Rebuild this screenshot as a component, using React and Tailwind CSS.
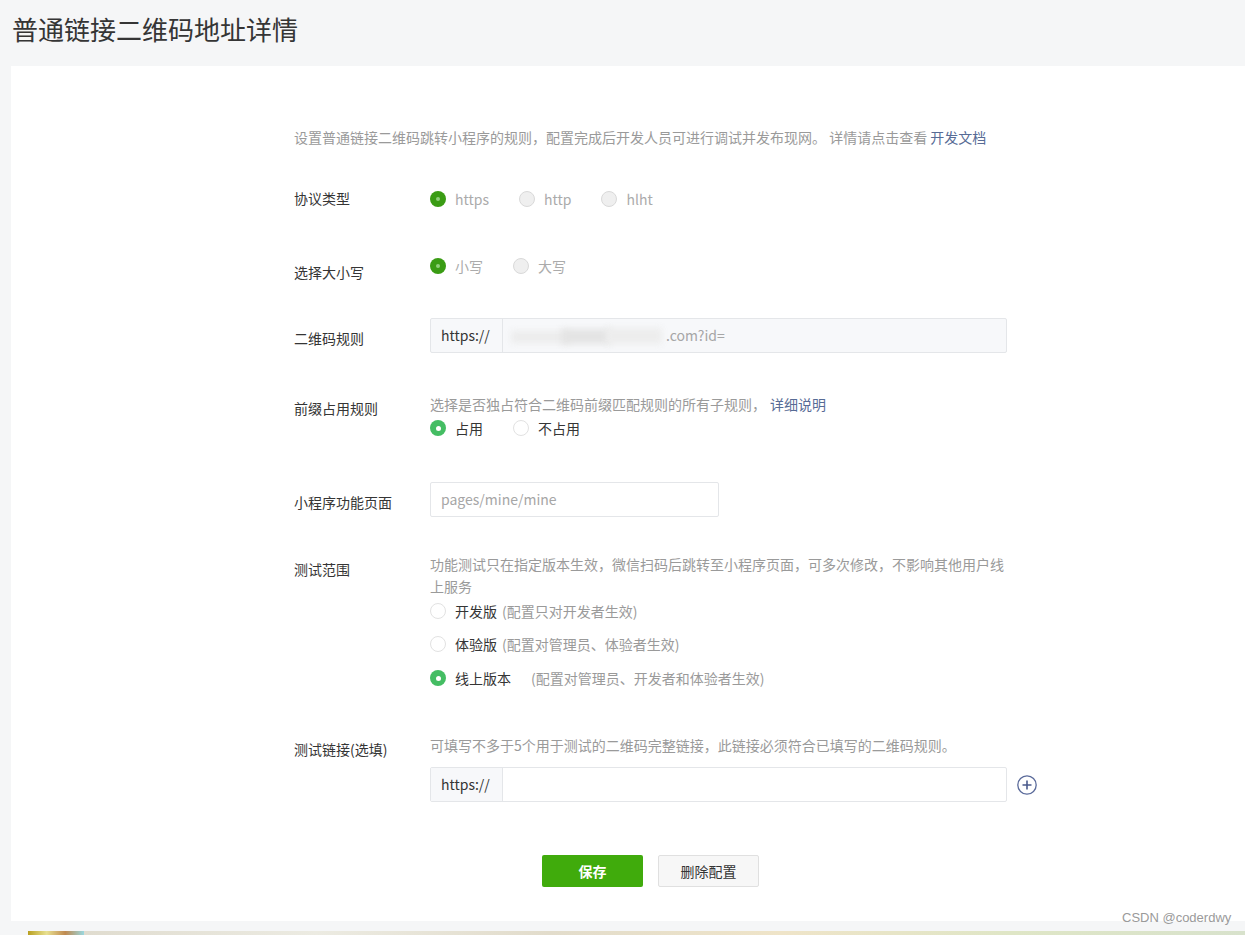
import React from "react";

const FONT = { fontFamily: '"Noto Sans CJK SC", "Noto Sans", sans-serif' };

function Radio({ checked, variant = "normal" }) {
  if (variant === "disabled") {
    return checked ? (
      <span className="w-[16px] h-[16px] rounded-full bg-[#3a9c14] flex items-center justify-center shrink-0">
        <span className="w-[4px] h-[4px] rounded-full bg-[#8fcf7a]" />
      </span>
    ) : (
      <span className="w-[16px] h-[16px] rounded-full bg-[#efefef] border border-[#d9d9d9] shrink-0" />
    );
  }
  return checked ? (
    <span className="w-[16px] h-[16px] rounded-full bg-[#44bd63] flex items-center justify-center shrink-0">
      <span className="w-[5px] h-[5px] rounded-full bg-white" />
    </span>
  ) : (
    <span className="w-[16px] h-[16px] rounded-full bg-white border border-[#e2e2e2] shrink-0" />
  );
}

function RadioItem({ checked, variant, label, textClass }) {
  return (
    <div className="flex items-center mr-[30px] h-[20px]">
      <Radio checked={checked} variant={variant} />
      <span className={"ml-[9px] text-[14px] leading-[20px] " + textClass}>{label}</span>
    </div>
  );
}

function Row({ label, labelPt, mt, children }) {
  return (
    <div className="flex" style={{ marginTop: mt }}>
      <div className="w-[136px] shrink-0 text-[14px] leading-[20px] text-[#353535]" style={{ paddingTop: labelPt }}>
        {label}
      </div>
      <div className="w-[577px]">{children}</div>
    </div>
  );
}

export default function App() {
  return (
    <div className="w-[1245px] h-[935px] bg-[#f5f6f7] overflow-hidden relative flex flex-col" style={FONT}>
      <div className="h-[66px] pl-[12px] pt-[11px] text-[26px] leading-[36px] text-[#353535] shrink-0">
        普通链接二维码地址详情
      </div>
      <div className="ml-[11px] h-[855px] bg-white shrink-0 pt-[61px]">
        <div className="ml-[283px] w-[713px]">
          <div className="text-[14px] leading-[20px] text-[#9a9a9a] whitespace-nowrap">
            设置普通链接二维码跳转小程序的规则，配置完成后开发人员可进行调试并发布现网。 详情请点击查看 <span className="text-[#576b95]">开发文档</span>
          </div>

          <Row label="协议类型" labelPt={0} mt={41}>
            <div className="flex items-center pt-[1px]">
              <RadioItem checked variant="disabled" label="https" textClass="text-[#ababab]" />
              <RadioItem variant="disabled" label="http" textClass="text-[#ababab]" />
              <RadioItem variant="disabled" label="hlht" textClass="text-[#ababab]" />
            </div>
          </Row>

          <Row label="选择大小写" labelPt={6} mt={47}>
            <div className="flex items-center">
              <RadioItem checked variant="disabled" label="小写" textClass="text-[#ababab]" />
              <RadioItem variant="disabled" label="大写" textClass="text-[#ababab]" />
            </div>
          </Row>

          <Row label="二维码规则" labelPt={10} mt={36}>
            <div className="flex h-[35px] border border-[#e4e6e9] rounded-[2px] bg-[#f7f8fa] text-[14px]">
              <div className="w-[72px] shrink-0 border-r border-[#e4e6e9] flex items-center pl-[10px] text-[#353535]">
                https://
              </div>
              <div className="flex items-center pl-[8px] text-[#a6a6a6] relative">
                <div className="w-[154px] h-[20px] relative mr-[1px]">
                  <div className="absolute left-[0px] top-[5px] w-[60px] h-[12px] bg-[#ececec] blur-[3px]" />
                  <div className="absolute left-[50px] top-[3px] w-[50px] h-[15px] bg-[#e4e4e4] blur-[3px]" />
                  <div className="absolute left-[95px] top-[2px] w-[56px] h-[16px] bg-[#ededed] blur-[3px]" />
                </div>
                <span>.com?id=</span>
              </div>
            </div>
          </Row>

          <Row label="前缀占用规则" labelPt={4} mt={41}>
            <div className="text-[14px] leading-[20px] text-[#9a9a9a] whitespace-nowrap">
              选择是否独占符合二维码前缀匹配规则的所有子规则，
              <span className="ml-[4px] text-[#576b95]">详细说明</span>
            </div>
            <div className="flex items-center mt-[4px]">
              <RadioItem checked label="占用" textClass="text-[#353535]" />
              <RadioItem label="不占用" textClass="text-[#353535]" />
            </div>
          </Row>

          <Row label="小程序功能页面" labelPt={10} mt={44}>
            <div className="w-[289px] h-[35px] border border-[#e4e6e9] rounded-[2px] flex items-center pl-[10px] text-[14px] text-[#a6a6a6]">
              pages/mine/mine
            </div>
          </Row>

          <Row label="测试范围" labelPt={6} mt={36}>
            <div className="text-[14px] leading-[22px] text-[#9a9a9a]">
              功能测试只在指定版本生效，微信扫码后跳转至小程序页面，可多次修改，不影响其他用户线上服务
            </div>
            <div className="flex items-center h-[20px] mt-[4px] text-[14px] leading-[20px]">
              <Radio />
              <span className="ml-[9px] text-[#353535]">开发版</span>
              <span className="ml-[5px] text-[#9a9a9a]">(配置只对开发者生效)</span>
            </div>
            <div className="flex items-center h-[20px] mt-[13px] text-[14px] leading-[20px]">
              <Radio />
              <span className="ml-[9px] text-[#353535]">体验版</span>
              <span className="ml-[5px] text-[#9a9a9a]">(配置对管理员、体验者生效)</span>
            </div>
            <div className="flex items-center h-[20px] mt-[14px] text-[14px] leading-[20px]">
              <Radio checked />
              <span className="ml-[9px] text-[#353535]">线上版本</span>
              <span className="ml-[20px] text-[#9a9a9a]">(配置对管理员、开发者和体验者生效)</span>
            </div>
          </Row>

          <Row label="测试链接(选填)" labelPt={4} mt={47}>
            <div className="text-[14px] leading-[20px] text-[#9a9a9a] whitespace-nowrap">
              可填写不多于5个用于测试的二维码完整链接，此链接必须符合已填写的二维码规则。
            </div>
            <div className="flex items-center mt-[12px]">
              <div className="w-[577px] shrink-0 flex h-[35px] border border-[#e4e6e9] rounded-[2px] bg-white text-[14px]">
                <div className="w-[72px] shrink-0 bg-[#f7f8fa] border-r border-[#e4e6e9] flex items-center pl-[10px] text-[#353535]">
                  https://
                </div>
              </div>
              <svg className="ml-[10px] shrink-0" width="20" height="20" viewBox="0 0 20 20">
                <circle cx="10" cy="10" r="9.2" fill="none" stroke="#5a6a9a" strokeWidth="1.3" />
                <path d="M10 5.5v9M5.5 10h9" stroke="#4a5a8c" strokeWidth="1.6" />
              </svg>
            </div>
          </Row>

          <div className="flex justify-center gap-[15px] mt-[53px]">
            <div className="w-[101px] h-[32px] rounded-[2px] bg-[#40ab0c] text-white text-[14px] font-bold flex items-center justify-center">
              保存
            </div>
            <div className="w-[101px] h-[32px] rounded-[2px] bg-[#f7f7f7] border border-[#e0e0e0] text-[#353535] text-[14px] flex items-center justify-center">
              删除配置
            </div>
          </div>
        </div>
      </div>
      <div className="h-[10px] shrink-0" />
      <div className="h-[4px] shrink-0 flex">
        <div className="w-[28px] bg-[#f5f6f7]" />
        <div className="w-[56px] bg-[linear-gradient(90deg,#b9a020,#e8e090,#c08a50,#9ad8e0)]" />
        <div className="flex-1 bg-[linear-gradient(90deg,#e0dccf,#ecebe2_20%,#e2dccb_40%,#efe4c8_60%,#dfe6c6_80%,#d8e2cc)]" />
      </div>
      <div className="absolute left-[1122px] top-[910px] text-[13px] leading-[16px] text-[#9a9a9a]" style={{ fontFamily: '"Liberation Sans", sans-serif' }}>
        CSDN @coderdwy
      </div>
    </div>
  );
}
